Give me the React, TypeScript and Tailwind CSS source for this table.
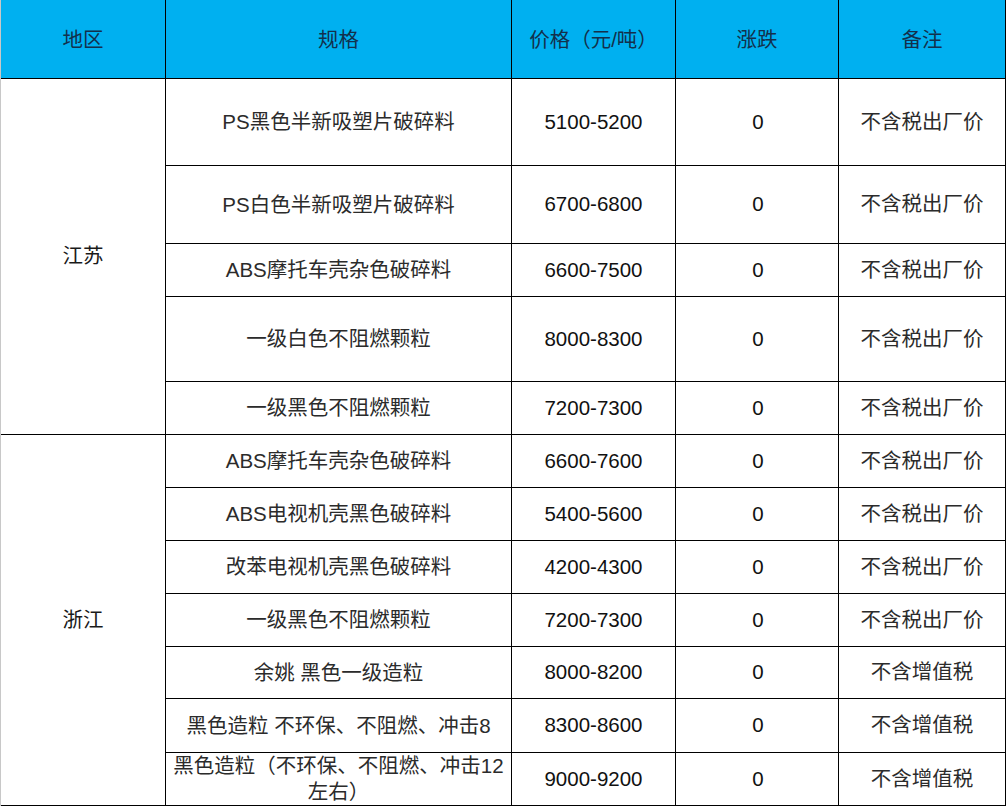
import React from "react";

type Row = { spec: React.ReactNode; price: string; chg: string; note: string };

const js: Row[] = [
  { spec: "PS黑色半新吸塑片破碎料", price: "5100-5200", chg: "0", note: "不含税出厂价" },
  { spec: "PS白色半新吸塑片破碎料", price: "6700-6800", chg: "0", note: "不含税出厂价" },
  { spec: "ABS摩托车壳杂色破碎料", price: "6600-7500", chg: "0", note: "不含税出厂价" },
  { spec: "一级白色不阻燃颗粒", price: "8000-8300", chg: "0", note: "不含税出厂价" },
  { spec: "一级黑色不阻燃颗粒", price: "7200-7300", chg: "0", note: "不含税出厂价" },
];

const zj: Row[] = [
  { spec: "ABS摩托车壳杂色破碎料", price: "6600-7600", chg: "0", note: "不含税出厂价" },
  { spec: "ABS电视机壳黑色破碎料", price: "5400-5600", chg: "0", note: "不含税出厂价" },
  { spec: "改苯电视机壳黑色破碎料", price: "4200-4300", chg: "0", note: "不含税出厂价" },
  { spec: "一级黑色不阻燃颗粒", price: "7200-7300", chg: "0", note: "不含税出厂价" },
  { spec: "余姚 黑色一级造粒", price: "8000-8200", chg: "0", note: "不含增值税" },
  { spec: "黑色造粒 不环保、不阻燃、冲击8", price: "8300-8600", chg: "0", note: "不含增值税" },
  {
    spec: (
      <>
        黑色造粒（不环保、不阻燃、冲击12
        <br />
        左右）
      </>
    ),
    price: "9000-9200",
    chg: "0",
    note: "不含增值税",
  },
];

const cell =
  "flex items-center justify-center text-center border-r border-b border-black";
const cjk = "text-[#2b2b2b]";
const num = "text-[#111]";

function Body({ rows }: { rows: Row[] }) {
  return (
    <>
      {rows.map((r, i) => (
        <React.Fragment key={i}>
          <div className={`${cell} ${cjk} leading-[26px] px-1`}>{r.spec}</div>
          <div className={`${cell} ${num}`}>{r.price}</div>
          <div className={`${cell} ${num} pl-[2px]`}>{r.chg}</div>
          <div className={`${cell} ${cjk}`}>{r.note}</div>
        </React.Fragment>
      ))}
    </>
  );
}

export default function App() {
  return (
    <div className="w-[1007px] h-[806px] bg-white overflow-hidden">
      <div
        className="grid grid-cols-[165px_346px_164px_163px_167px] grid-rows-[79px_87px_78px_53px_85px_53px_53px_53px_53px_53px_52px_54px_53px] border-l border-l-[#c8c8c8] w-[1006px] text-[20.5px]"
        style={{ fontFamily: '"Liberation Sans", "Noto Sans CJK SC", sans-serif' }}
      >
        {["地区", "规格", "价格（元/吨）", "涨跌", "备注"].map((h) => (
          <div key={h} className={`${cell} bg-[#00b0f0] text-[#13304c] pt-[3px]`}>
            {h}
          </div>
        ))}
        <div className={`${cell} row-span-5 text-[#1a1a1a]`}>江苏</div>
        <Body rows={js} />
        <div className={`${cell} row-span-7 text-[#1a1a1a]`}>浙江</div>
        <Body rows={zj} />
      </div>
    </div>
  );
}
